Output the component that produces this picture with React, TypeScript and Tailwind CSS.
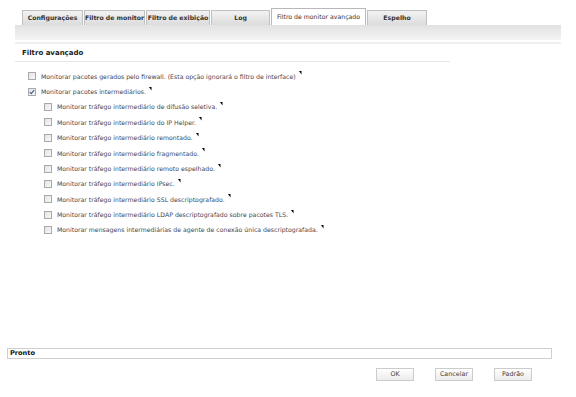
const tabs = [
  { label: "Configurações", w: "w-[61px]" },
  { label: "Filtro de monitor", w: "w-[61px]" },
  { label: "Filtro de exibição", w: "w-[64px]" },
  { label: "Log", w: "w-[59px]" },
  { label: "Filtro de monitor avançado", w: "w-[95px]", active: true },
  { label: "Espelho", w: "w-[60px]" },
];

const subOptions = [
  "Monitorar tráfego intermediário de difusão seletiva.",
  "Monitorar tráfego intermediário do IP Helper.",
  "Monitorar tráfego intermediário remontado.",
  "Monitorar tráfego intermediário fragmentado.",
  "Monitorar tráfego intermediário remoto espelhado.",
  "Monitorar tráfego intermediário IPsec.",
  "Monitorar tráfego intermediário SSL descriptografado.",
  "Monitorar tráfego intermediário LDAP descriptografado sobre pacotes TLS.",
  "Monitorar mensagens intermediárias de agente de conexão única descriptografada.",
];

const Box = ({ checked = false }: { checked?: boolean }) => (
  <span className="flex h-[8px] w-[8px] shrink-0 items-center justify-center border border-[#a9a9a9] bg-gradient-to-br from-[#e4e4e4] to-[#f8f8f8]">
    {checked && (
      <svg width="6" height="6" viewBox="0 0 6 6">
        <path d="M0.8 3.2 L2.3 4.7 L5.2 1" fill="none" stroke="#3b5a8c" strokeWidth="1.1" />
      </svg>
    )}
  </span>
);

const Help = () => (
  <svg width="3" height="4" viewBox="0 0 3 4" className="ml-[3px] -translate-y-[3px]">
    <path d="M0 0 H2.5 V3.5 Z" fill="#000" />
  </svg>
);

const Row = ({ text, checked, sub }: { text: string; checked?: boolean; sub?: boolean }) => (
  <div className={`flex h-[15.4px] items-center ${sub ? "pl-[44px]" : "pl-[28px]"}`}>
    <Box checked={checked} />
    <span className="ml-[5px] whitespace-nowrap text-[6.2px] text-[#464650]">{text}</span>
    <Help />
  </div>
);

const App = () => (
  <div className="flex h-[397px] w-[576px] flex-col bg-white" style={{ fontFamily: "Tahoma, 'DejaVu Sans', sans-serif" }}>
    <div className="flex items-end gap-[1px] pl-[22px] pt-[8px]">
      {tabs.map((t) =>
        t.active ? (
          <div key={t.label} className={`${t.w} flex h-[17px] items-center justify-center whitespace-nowrap border border-b-0 border-[#b8b8b8] bg-white text-[6.2px] text-[#333]`}>
            {t.label}
          </div>
        ) : (
          <div key={t.label} className={`${t.w} flex h-[15px] items-center justify-center whitespace-nowrap border border-b-0 border-[#c0c0c0] bg-gradient-to-b from-[#f2f2f2] to-[#dcdcdc] text-[6.2px] font-bold text-[#333]`}>
            {t.label}
          </div>
        )
      )}
    </div>
    <div className="mx-[15px] h-[15px] bg-gradient-to-b from-[#e2e2e2] to-[#f4f4f4]" />
    <div className="mx-[15px] mt-[2px] h-[2px] bg-[#f0f0f0]" />

    <div className="mx-[15px] mt-[4px] w-[435px] border-b border-[#e6e6e6] pb-[2px] pl-[7px] text-[7px] font-bold text-[#222]">Filtro avançado</div>

    <div className="mt-[7px] flex flex-col">
      <Row text="Monitorar pacotes gerados pelo firewall. (Esta opção ignorará o filtro de interface)" />
      <Row text="Monitorar pacotes intermediários." checked />
      {subOptions.map((s) => (
        <Row key={s} text={s} sub />
      ))}
    </div>

    <div className="flex-1" />

    <div className="mx-[7px] flex h-[11px] w-[545px] items-center border border-[#cfcfcf] pl-[2px] text-[6.6px] font-bold text-[#111]">Pronto</div>

    <div className="mb-[16px] mt-[9px] flex justify-end gap-[21px] pr-[44px]">
      {["OK", "Cancelar", "Padrão"].map((b) => (
        <button key={b} className="flex h-[13px] w-[38px] items-center justify-center border border-[#cccccc] bg-gradient-to-b from-white to-[#ececec] text-[6.4px] text-[#444]">
          {b}
        </button>
      ))}
    </div>
  </div>
);

export default App;
